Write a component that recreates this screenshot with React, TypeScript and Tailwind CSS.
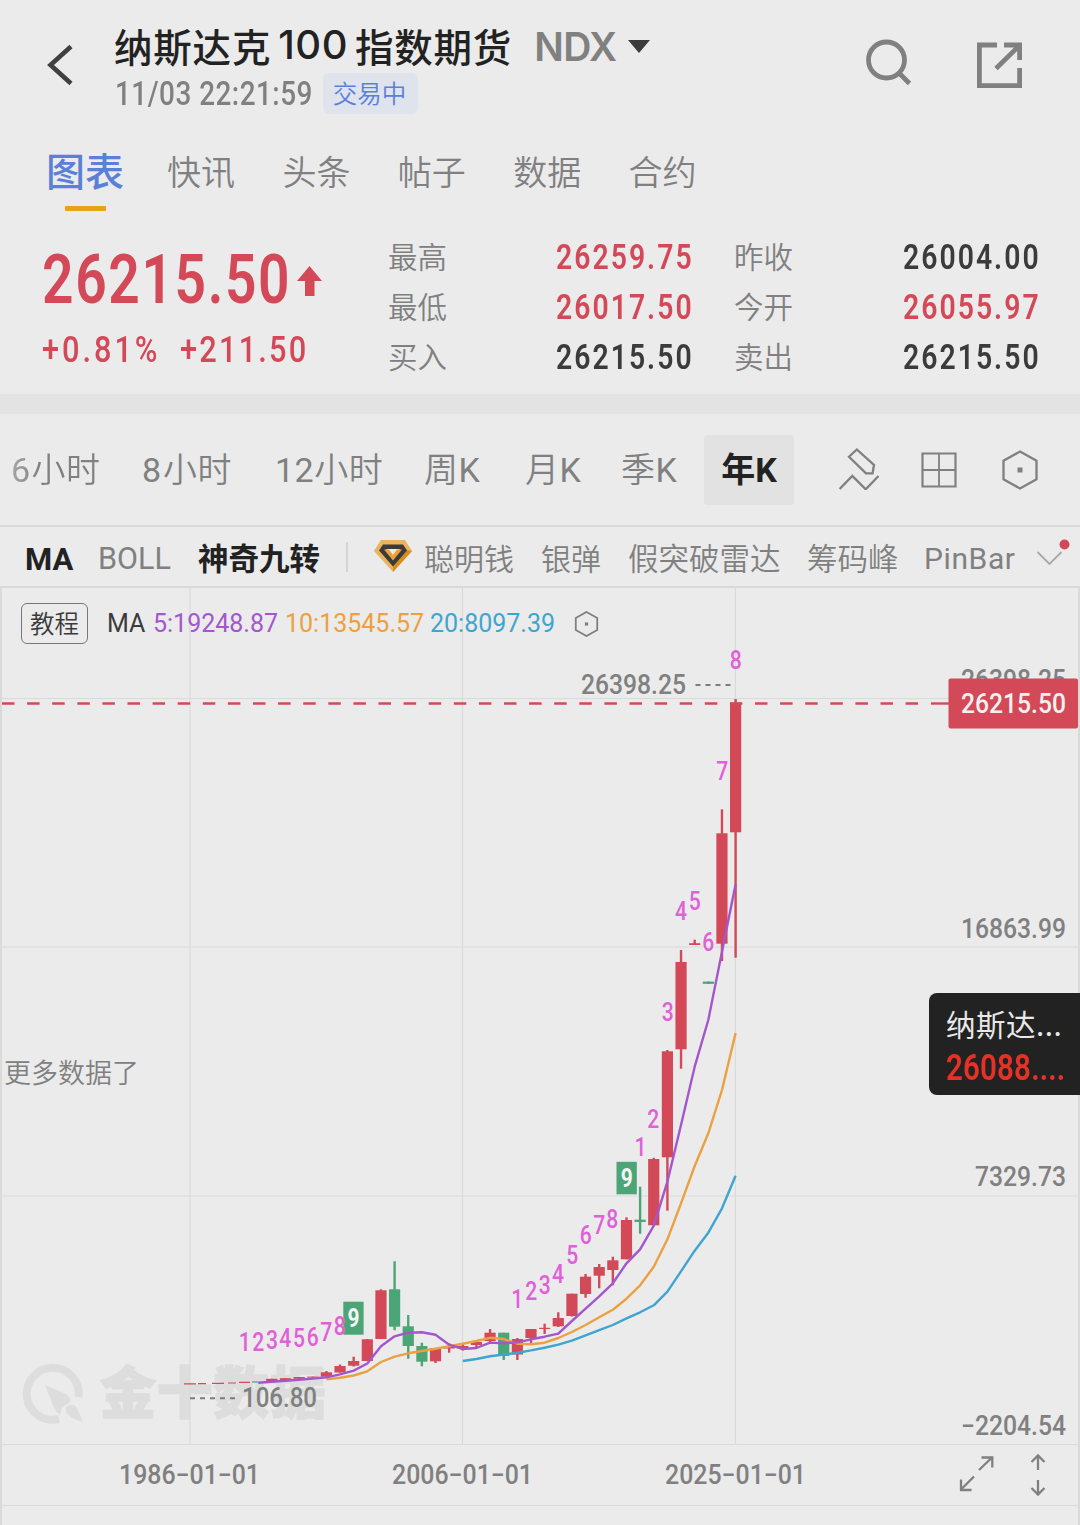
import type { ReactNode } from "react";

type Candle = [i: number, top: number, bottom: number, high: number, low: number, down?: boolean];

const RED = "#d34958";
const GREEN = "#4ba577";

// one candle per year, 1986 is the first grid line
const X0 = 190;
const STEP = 13.64;
const cx = (i: number) => X0 + STEP * i;

const candles: Candle[] = [
  [6, 1378.8, 1381, 1378.8, 1381],
  [7, 1378.2, 1380, 1378.2, 1380],
  [8, 1377, 1378.8, 1377, 1378.8],
  [9, 1376.6, 1377.6, 1376.6, 1377.6],
  [10, 1372.3, 1376.5, 1371, 1376.5],
  [11, 1366, 1372.5, 1364.5, 1372.5],
  [12, 1361, 1365.7, 1356.7, 1366.5],
  [13, 1339.3, 1361, 1339, 1361],
  [14, 1290.3, 1339, 1289.3, 1339],
  [15, 1289.3, 1326.7, 1261.3, 1330.3, true],
  [16, 1326.3, 1346, 1315, 1358.7, true],
  [17, 1346, 1361.7, 1342.7, 1366.3, true],
  [18, 1348, 1361.3, 1348, 1363],
  [19, 1346.5, 1348.5, 1343.5, 1352.7],
  [20, 1346, 1348, 1343.5, 1350.5],
  [21, 1342, 1345, 1341, 1348],
  [22, 1332.7, 1341, 1329, 1343],
  [23, 1332.7, 1356, 1332.7, 1360, true],
  [24, 1339, 1354.5, 1338, 1360],
  [25, 1329, 1338, 1329, 1343],
  [26, 1327.8, 1329, 1323.7, 1334],
  [27, 1318, 1326.3, 1312.3, 1327],
  [28, 1293.7, 1316, 1293.7, 1316.5],
  [29, 1276.7, 1294, 1274, 1297.7],
  [30, 1267, 1275.7, 1264, 1288.3],
  [31, 1260.3, 1270, 1256.7, 1285.3],
  [32, 1220, 1259.3, 1217.3, 1259.3],
  [33, 1219.7, 1222, 1186.7, 1233.7, true],
  [34, 1159, 1225.3, 1157.8, 1225.3],
  [35, 1051.3, 1157.3, 1050, 1210.7],
  [36, 962, 1049.3, 950, 1068.7],
  [37, 943.2, 945, 939.7, 945],
  [38, 981.6, 983.8, 981.6, 983.8, true],
  [39, 833.3, 943.7, 809.3, 961],
  [40, 702.7, 832.3, 699, 957.7],
];

const ma5 = [
  1382.7, 1381.8, 1380.8, 1379.8, 1378.6, 1377.3, 1374.4, 1370.6, 1363.5, 1346.3, 1336.3, 1332.7, 1332.3, 1334.7,
  1344.7, 1349, 1348, 1342.6, 1343.3, 1342.3, 1339.3, 1336.7, 1333.7, 1321, 1308.7, 1296.3, 1283.3, 1263.3, 1249.3,
  1225.7, 1181.7, 1125, 1066.7, 1020, 951.7, 884.3,
];
const ma10 = [
  1379.3, 1377.8, 1375.5, 1371.3, 1362, 1356.7, 1353.3, 1351, 1348.7, 1346.3, 1343.7, 1341, 1337.8, 1339, 1343.7,
  1344.3, 1342.7, 1338, 1332, 1325, 1317.3, 1309.7, 1298.7, 1285.3, 1266.7, 1239.3, 1203.3, 1166, 1133.3, 1090, 1033,
];
const ma20 = [
  1361, 1359, 1356.3, 1354.5, 1352.7, 1350.4, 1347.7, 1344.7, 1340.7, 1335.3, 1330.2, 1325, 1318.3, 1312.3, 1305.3,
  1291.7, 1271.3, 1250.7, 1232.7, 1208.3, 1175.7,
];

const line = (ys: number[], from: number) => ys.map((y, k) => `${cx(from + k).toFixed(1)},${y}`).join(" ");

// magic nine counters: text, centre x, centre y
const counters: [string, number, number][] = [
  ["1", 244.7, 1342], ["2", 258.3, 1341.5], ["3", 272, 1340], ["4", 285.3, 1338.3],
  ["5", 299, 1337.7], ["6", 312.7, 1337], ["7", 326.3, 1332], ["8", 339.7, 1325.7],
  ["1", 517.3, 1299.3], ["2", 531.3, 1290.7], ["3", 544.7, 1284.7], ["4", 558, 1274],
  ["5", 572.3, 1254.7], ["6", 585.7, 1235.3], ["7", 599.3, 1225.3], ["8", 612.3, 1218.7],
  ["1", 640.5, 1147], ["2", 653.3, 1119], ["3", 667.7, 1011.7], ["4", 681, 911],
  ["5", 694.7, 901.3], ["6", 708.3, 942.3], ["7", 722.3, 770.7], ["8", 735.7, 660],
];

const quotes = [
  { label: "最高", value: "26259.75", color: "text-[#d34958]", label2: "昨收", value2: "26004.00", color2: "text-[#3b3b3b]" },
  { label: "最低", value: "26017.50", color: "text-[#d34958]", label2: "今开", value2: "26055.97", color2: "text-[#d34958]" },
  { label: "买入", value: "26215.50", color: "text-[#3b3b3b]", label2: "卖出", value2: "26215.50", color2: "text-[#3b3b3b]" },
];

function Digits({ className = "", children }: { className?: string; children: ReactNode }) {
  return (
    <span
      className={`inline-block whitespace-nowrap font-[family-name:Roboto,sans-serif] leading-none ${className}`}
    >
      {children}
    </span>
  );
}

function Hexagon({ className, stroke }: { className: string; stroke: number }) {
  return (
    <svg viewBox="0 0 36 40" className={className} fill="none" stroke="#808080" strokeWidth={stroke}>
      <path d="M18 1.5 34.5 10.7V29.3L18 38.5 1.5 29.3V10.7Z" />
      <rect x="15.5" y="17.5" width="5" height="5" fill="#808080" stroke="none" />
    </svg>
  );
}

function Header() {
  return (
    <header className="flex h-[130px] pl-[46px] text-[#808080]">
      <svg viewBox="0 0 30 44" className="mt-[43px] h-[44px] w-[30px] shrink-0" fill="none" stroke="#404040" strokeWidth="4.6">
        <path d="M25 3.5 4.5 22 25 40.5" />
      </svg>
      <div className="ml-[38px] w-[720px]">
        <div className="mt-[21px] flex h-[50px] items-center whitespace-nowrap leading-none">
          <h1 className="-mt-[2px] flex items-center text-[38.5px] font-medium tracking-[0.8px] text-[#222]">
            纳斯达克
            <span className="ml-[7px] mr-[7px] font-[family-name:Inter,sans-serif] text-[40px] font-medium tracking-[0.5px]">
              100
            </span>
            指数期货
          </h1>
          <span className="ml-[22px] w-[86px] font-[family-name:Inter,sans-serif] text-[39px] font-semibold tracking-[-0.6px]">
            NDX
          </span>
          <svg viewBox="0 0 22 13" className="ml-[8px] h-[13px] w-[22px] fill-[#3b3b3b]">
            <path d="M0 0H22L11 13Z" />
          </svg>
        </div>
        <div className="mt-px flex h-[42px] items-center">
          <div className="w-[209px] pl-px">
            <Digits className="origin-left scale-x-[0.82] text-[34px] font-medium tracking-[0.6px]">11/03 22:21:59</Digits>
          </div>
          <span className="flex h-[41px] w-[95px] items-center justify-center rounded-md bg-[#dfe3eb] pr-[2px] text-[24.5px] leading-none text-[#5a80de] font-[350]">
            交易中
          </span>
        </div>
      </div>
      <svg viewBox="0 0 48 48" className="ml-[30px] mt-[39px] h-[48px] w-[48px] shrink-0" fill="none" stroke="#808080" strokeWidth="4.8">
        <circle cx="22.5" cy="21" r="18" />
        <path d="m35 34 10.5 10.5" />
      </svg>
      <svg viewBox="0 0 48 48" className="ml-[63px] mt-[41px] h-[48px] w-[48px] shrink-0" fill="none" stroke="#808080" strokeWidth="4.8">
        <path d="M22 4H4.4V44.6H44.6V27M29 4H44.6V19M44 5 21 27.5" />
      </svg>
    </header>
  );
}

function Tabs() {
  return (
    <nav className="flex h-[112px] pl-[46px] text-[34px] leading-none text-[#808080]">
      <div className="flex w-[121px] flex-col">
        <span className="mt-[20px] text-[39px] font-medium text-[#5a80d8]">图表</span>
        <span className="ml-[19px] mt-[17px] h-[5px] w-[41px] rounded-[1px] bg-[#e5a51a]" />
      </div>
      {["快讯", "头条", "帖子", "数据", "合约"].map((t) => (
        <span key={t} className="mt-[24px] w-[115.4px] font-[350]">
          {t}
        </span>
      ))}
    </nav>
  );
}

function Quote() {
  return (
    <section className="flex h-[152px] pl-[42px] leading-none">
      <div className="w-[346px] text-[#d34958]">
        <div className="flex items-center pt-[3px]">
          <div className="w-[255px]">
            <Digits className="origin-left scale-x-[0.8] text-[69px] font-semibold tracking-[2px]">26215.50</Digits>
          </div>
          <svg viewBox="0 0 25 30" className="mt-[2px] h-[30px] w-[25px] fill-current">
            <path d="M12.500 0 25 15H17.500V30H8V15H0Z" />
          </svg>
        </div>
        <div className="mt-[17px] flex">
          <div className="w-[138px]">
            <Digits className="origin-left scale-x-[0.82] text-[37.5px] font-medium tracking-[3.6px]">+0.81%</Digits>
          </div>
          <Digits className="origin-left scale-x-[0.82] text-[37.5px] font-medium tracking-[2.7px]">+211.50</Digits>
        </div>
      </div>
      <div className="flex flex-col">
        {quotes.map((q) => (
          <div key={q.label} className="flex h-[50px] items-start text-[29.5px] font-[350] text-[#808080]">
            <span className="-mt-px w-[168px]">{q.label}</span>
            <div className="-mt-[2px] w-[178px]">
              <Digits className={`origin-left scale-x-[0.8] text-[35.5px] font-semibold tracking-[2.5px] ${q.color}`}>{q.value}</Digits>
            </div>
            <span className="-mt-px w-[169px]">{q.label2}</span>
            <div className="-mt-[2px]">
              <Digits className={`origin-left scale-x-[0.8] text-[35.5px] font-semibold tracking-[2.5px] ${q.color2}`}>{q.value2}</Digits>
            </div>
          </div>
        ))}
      </div>
    </section>
  );
}

function Periods() {
  return (
    <nav className="flex h-[111px] items-center whitespace-nowrap font-[family-name:Roboto,'Noto_Sans_CJK_SC',sans-serif] text-[34px] font-[350] leading-none tracking-[0.5px] text-[#808080]">
      <span className="w-[132px] bg-gradient-to-r from-[#b5b5b5] to-[#808080] to-30% bg-clip-text pl-[11px] text-transparent">
        <span className="font-normal tracking-[1.5px]">6</span>小时
      </span>
      <span className="w-[143px] pl-[10px]">
        <span className="font-normal tracking-[2px]">8</span>小时
      </span>
      <span className="w-[149px]">
        <span className="font-normal">12</span>小时
      </span>
      <span className="w-[101px]">
        周<span className="font-normal">K</span>
      </span>
      <span className="w-[96px]">
        月<span className="font-normal">K</span>
      </span>
      <span className="w-[83px]">
        季<span className="font-normal">K</span>
      </span>
      <span className="flex h-[70px] w-[90px] items-center justify-center rounded-[3px] bg-[#e2e2e2] font-bold tracking-[0px] text-[#222]">
        年K
      </span>
      <svg viewBox="0 0 42 44" className="-mt-[3px] ml-[44px] h-[44px] w-[42px]" fill="none" stroke="#808080" strokeWidth="2.3">
        <path d="M18.800 3.500 11 10.700 28 27.300H34.600L36 19ZM1.600 43 14.300 30 27.700 43.300 40.500 30" />
      </svg>
      <svg viewBox="0 0 36 36" className="ml-[41px] h-[36px] w-[36px]" fill="none" stroke="#808080" strokeWidth="2.2">
        <path d="M1.500 1.500H34.500V34.500H1.500Z" />
        <path d="M18 1V35M1 18H35" strokeWidth="1.800" />
      </svg>
      <Hexagon className="ml-[45px] h-[40px] w-[36px]" stroke={2.3} />
    </nav>
  );
}

function Indicators() {
  return (
    <nav className="flex h-[63px] items-center whitespace-nowrap border-y-2 border-[#d9d9d9] text-[30px] font-[350] leading-none text-[#808080]">
      <span className="mt-[5px] w-[73px] pl-[25px] font-[family-name:Roboto,sans-serif] text-[31px] font-bold text-[#222]">MA</span>
      <span className="ml-[25px] mt-[5px] w-[100px] font-[family-name:Roboto,sans-serif] text-[30.5px] font-normal tracking-[0px]">
        BOLL
      </span>
      <span className="mt-px w-[148px] text-[30.5px] font-bold text-[#222]">神奇九转</span>
      <span className="h-[30px] w-[2px] bg-[#d5d5d5]" />
      <svg viewBox="0 0 38 32" className="-mt-px ml-[26px] h-[32px] w-[38px]">
        <path d="M7 0H31L38 11 19 32 0 11Z" fill="#e9b45c" />
        <path d="M38 11 19 32V25L32 10Z" fill="#d98d1e" />
        <path d="M9 4.500H29L33 10.500 19 26.500 5 10.500Z" fill="#3c3a3a" />
        <path d="M12 9H26L19 19Z" fill="#ebebeb" />
        <path d="M10 9.500H15L19 15 23 9.500H28L19 20.500Z" fill="#e8a334" />
      </svg>
      <span className="ml-[12px] mt-px w-[117px]">聪明钱</span>
      <span className="mt-px w-[87px]">银弹</span>
      <span className="mt-px w-[179px] text-[30.5px]">假突破雷达</span>
      <span className="mt-px w-[117px] text-[30.5px]">筹码峰</span>
      <span className="mt-[5px] w-[112px] font-[family-name:Roboto,sans-serif] text-[30px] font-normal tracking-[0.6px]">PinBar</span>
      <svg viewBox="0 0 34 34" className="mb-[4px] h-[34px] w-[34px] shrink-0" fill="none">
        <path d="M1.500 14 13.500 26 25.500 14" stroke="#a8a8a8" strokeWidth="1.800" />
        <circle cx="28.500" cy="6.500" r="5" fill={RED} />
      </svg>
    </nav>
  );
}

function Chart() {
  return (
    <svg viewBox="0 588 1080 937" className="block h-[937px] w-[1080px] font-[family-name:Roboto,sans-serif]">
      <g fill="#dddddd">
        <path d="M59 1419A26 26 0 1 1 78.500 1397" fill="none" stroke="#dddddd" strokeWidth="8" />
        <path d="M45 1385 66 1394Q73 1399 69 1403L62 1408 60 1415Q56 1412 54 1408Z" />
        <path d="M66 1407Q73 1402 77 1408L83 1422Q70 1419 66 1412Z" />
        <text
          x="100"
          y="1413"
          fontSize="56"
          fontWeight="900"
          textLength="226"
          stroke="#dddddd"
          strokeWidth="1.500"
          className="font-[family-name:'Noto_Sans_CJK_SC',sans-serif]"
        >
          金十数据
        </text>
      </g>

      <g stroke="#dadada" strokeWidth="1.200">
        <path d="M190 588V1444M462.500 588V1444M735.500 588V1444" />
        <path d="M0 698.500H1080M0 947H1080M0 1196H1080M0 1444.500H1080M0 1505.500H1080" />
        <path d="M1 588V1525M1079 588V1525" strokeWidth="2" />
      </g>

      <text
        x="4"
        y="1083"
        fontSize="27"
        fontWeight="350"
        fill="#808080"
        textLength="135"
        className="font-[family-name:'Noto_Sans_CJK_SC',sans-serif]"
      >
        更多数据了
      </text>

      <path d="M2 703.500H920" stroke={RED} strokeWidth="2.400" strokeDasharray="12.500 12.600" />
      <path d="M931 703.500H950" stroke={RED} strokeWidth="2.400" />

      <g stroke="#7c7c7c" strokeWidth="2" strokeDasharray="5 5">
        <path d="M695.500 685H731" />
        <path d="M190 1398.300H236" />
      </g>

      {/* nearly flat first years */}
      <path
        d="M184 1383.800H196M198 1383.600H206M212 1383.400H224M228 1383H236M239 1382.400H250"
        stroke={RED}
        strokeWidth="1.200"
      />
      <path d="M252 1382H258" stroke={GREEN} strokeWidth="1.200" />

      {candles.map(([i, top, bottom, high, low, down]) => (
        <g key={i} fill={down ? GREEN : RED}>
          <rect x={cx(i) - 1.2} y={high} width="2.4" height={low - high} />
          <rect x={cx(i) - 5.6} y={top} width="11.2" height={bottom - top} />
        </g>
      ))}

      <g fill="none" strokeWidth="2.400" strokeLinejoin="round">
        <polyline points={line(ma20, 20)} stroke="#3fa5d0" />
        <polyline points={line(ma10, 10)} stroke="#eba041" />
        <polyline points={line(ma5, 5)} stroke="#a457cd" />
      </g>

      <rect x="343.300" y="1301.700" width="20.300" height="33" fill={GREEN} />
      <rect x="616.500" y="1161.800" width="20.300" height="32.500" fill={GREEN} />
      <g fill="#f5f5f5" fontSize="25" fontWeight="700">
        <text x="347.500" y="1327" textLength="12" lengthAdjust="spacingAndGlyphs">9</text>
        <text x="620.700" y="1187" textLength="12" lengthAdjust="spacingAndGlyphs">9</text>
      </g>
      <g fill="#e060d8" fontSize="25" fontWeight="500">
        {counters.map(([n, x, y]) => (
          <text key={`${n}-${x}`} x={x - 6} y={y + 9} textLength="12" lengthAdjust="spacingAndGlyphs">
            {n}
          </text>
        ))}
      </g>

      <g fill="#808080" fontSize="27" fontWeight="500">
        <text x="581" y="694" textLength="105" lengthAdjust="spacingAndGlyphs">26398.25</text>
        <text x="242" y="1406.500" textLength="75" lengthAdjust="spacingAndGlyphs">106.80</text>
        <text x="961" y="688.500" textLength="105" lengthAdjust="spacingAndGlyphs">26398.25</text>
        <text x="961" y="937.500" textLength="105" lengthAdjust="spacingAndGlyphs">16863.99</text>
        <text x="975" y="1186" textLength="91" lengthAdjust="spacingAndGlyphs">7329.73</text>
        <text x="961" y="1434.500" textLength="105" lengthAdjust="spacingAndGlyphs">−2204.54</text>
        <text x="119" y="1484" textLength="141" lengthAdjust="spacingAndGlyphs">1986−01−01</text>
        <text x="392" y="1484" textLength="141" lengthAdjust="spacingAndGlyphs">2006−01−01</text>
        <text x="665" y="1484" textLength="141" lengthAdjust="spacingAndGlyphs">2025−01−01</text>
      </g>

      <rect x="948.500" y="678.500" width="129.500" height="50" rx="2" fill={RED} />
      <text x="961" y="712.500" textLength="105" lengthAdjust="spacingAndGlyphs" fill="#f3f0f0" fontSize="27" fontWeight="500">
        26215.50
      </text>

      <g fill="none" stroke="#808080" strokeWidth="2.300">
        <path d="M979 1470 992 1457.500M981.500 1457.500H992.300V1467.500" />
        <path d="M974 1476.500 961 1489.500M961 1479.500V1490H971.500" />
        <path d="M1038 1470V1455.500M1031.500 1462 1038 1455.500 1044.500 1462" />
        <path d="M1038 1480V1494.500M1031.500 1488 1038 1494.500 1044.500 1488" />
      </g>
    </svg>
  );
}

export default function App() {
  return (
    <main className="flex h-[1525px] w-[1080px] flex-col overflow-hidden bg-[#ebebeb] font-[family-name:'Noto_Sans_CJK_SC',sans-serif]">
      <Header />
      <Tabs />
      <Quote />
      <div className="h-[20px] shrink-0 bg-[#e3e3e3]" />
      <Periods />
      <Indicators />
      <section className="relative">
        <Chart />
        <div className="absolute left-[21px] top-[15px] flex h-[41px] items-center whitespace-nowrap font-[family-name:Roboto,sans-serif] text-[25px] leading-none">
          <span className="flex h-[41px] w-[67px] items-center justify-center rounded-md border-[1.5px] border-[#777] font-[family-name:'Noto_Sans_CJK_SC',sans-serif] text-[24.5px] font-[350] text-[#3b3b3b]">
            教程
          </span>
          <span className="ml-[19px] w-[46px] text-[#3b3b3b]">MA</span>
          <span className="w-[132px] text-[#a457cd]">5:19248.87</span>
          <span className="w-[145px] text-[#eba041]">10:13545.57</span>
          <span className="w-[144px] text-[#3fa5d0]">20:8097.39</span>
          <Hexagon className="h-[26px] w-[25px]" stroke={2.8} />
        </div>
        <div className="absolute right-0 top-[405px] flex h-[102px] w-[151px] flex-col rounded-l-lg bg-[#222] pl-[17px] pt-[16px] leading-none">
          <span className="whitespace-nowrap text-[29.5px] tracking-[0.5px] text-[#e8e8e8]">纳斯达...</span>
          <Digits className="mt-[11px] origin-left scale-x-[0.82] text-[36px] font-semibold tracking-[0.2px] text-[#e53126]">
            26088....
          </Digits>
        </div>
      </section>
    </main>
  );
}
